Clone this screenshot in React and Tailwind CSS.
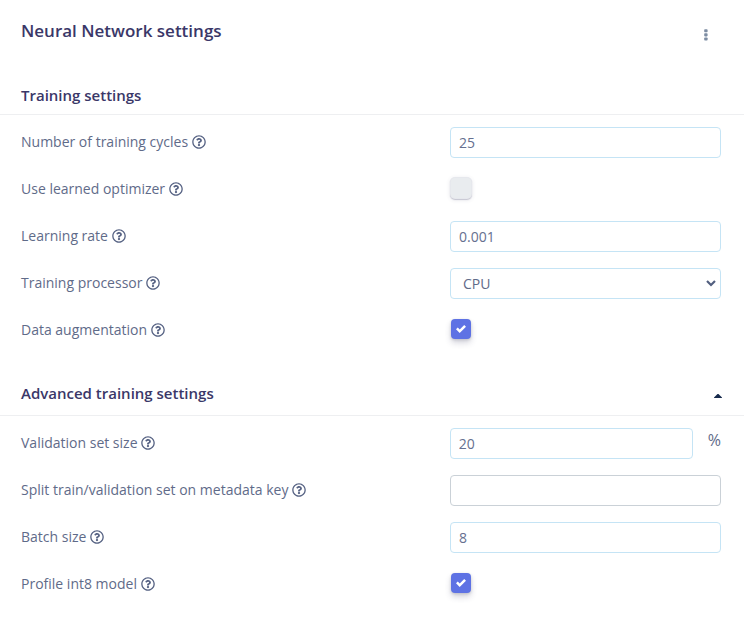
import { FaRegQuestionCircle } from "react-icons/fa";

function Row({ label, children }) {
  return (
    <div className="flex h-[47px] items-center pl-[21px] pr-[23px]">
      <div className="flex w-[429px] items-center pb-px text-sm">
        <span>{label}</span>
        <FaRegQuestionCircle className="ml-[3.8px] size-3.5 text-[#566283]" />
      </div>
      {children}
    </div>
  );
}

function Field({ value, className = "w-[271px] border-[#c5e4f5]" }) {
  return (
    <input
      type="text"
      defaultValue={value}
      className={`h-[31px] rounded border bg-white px-2 text-sm text-[#66708f] outline-none ${className}`}
    />
  );
}

function Checked() {
  return (
    <div className="mb-[3px] ml-px flex size-5 items-center justify-center rounded bg-[#5e72e4] shadow-[0_4px_6px_rgba(50,50,93,.2),0_1px_3px_rgba(0,0,0,.15)]">
      <svg viewBox="0 0 8 8" className="size-2.5" fill="#fff">
        <path d="M6.564.75l-3.59 3.612-1.538-1.55L0 4.26 2.974 7.25 8 2.193z" />
      </svg>
    </div>
  );
}

export default function App() {
  return (
    <div className="h-[632px] w-[744px] overflow-hidden bg-white font-['Open_Sans',sans-serif] text-[#5f6b89]">
      <header className="flex h-[76px] justify-between pl-[21px] pr-[36px] text-[#3a3768]">
        <h2 className="pt-[18px] text-[17px] leading-[26px] font-semibold">Neural Network settings</h2>
        <svg viewBox="0 0 4 12" className="mt-[28.5px] h-3 w-1" fill="#7d8da3">
          <rect x="0.2" y="0.2" width="3.4" height="3.1" rx="0.8" />
          <rect x="0.2" y="4.3" width="3.4" height="3.1" rx="0.8" />
          <rect x="0.2" y="8.4" width="3.4" height="3.1" rx="0.8" />
        </svg>
      </header>
      <div className="flex h-[39px] items-center border-b border-[#eeeff1] pl-[21px]">
        <h3 className="text-[15px] font-semibold text-[#3a3768]">Training settings</h3>
      </div>
      <section className="pt-1">
        <Row label="Number of training cycles"><Field value="25" /></Row>
        <Row label="Use learned optimizer">
          <div className="mb-[3px] ml-px size-5 rounded bg-[#e9ecef] shadow-[0_0_0_1px_#e6e8ed,0_1px_1px_1px_rgba(50,50,93,.22),0_1px_4px_1px_rgba(50,50,93,.12)]" />
        </Row>
        <Row label="Learning rate"><Field value="0.001" /></Row>
        <Row label="Training processor">
          <div className="flex h-[31px] w-[271px] items-center justify-between rounded border border-[#c5e4f5] pl-3 pr-1 pt-px text-sm">
            <span>CPU</span>
            <svg viewBox="0 0 10 8" className="mb-0.5 h-2 w-2.5" fill="none" stroke="#525f7f" strokeWidth="2.2">
              <path d="M1 2l4 4 4-4" />
            </svg>
          </div>
        </Row>
        <Row label="Data augmentation"><Checked /></Row>
      </section>
      <div className="mt-[23px] flex h-[39px] items-center justify-between border-b border-[#eeeff1] pl-[21px] pr-[22px]">
        <h3 className="pb-1.5 text-[15px] font-semibold text-[#3a3768]">Advanced training settings</h3>
        <svg viewBox="0 0 8 4" className="mb-px h-1 w-2" fill="#172b4d">
          <path d="M0 4V3.5L3.5 0h1L8 3.5V4z" />
        </svg>
      </div>
      <section className="pt-1">
        <Row label="Validation set size">
          <Field value="20" className="w-[243px] border-[#c5e4f5]" />
          <span className="mb-[7px] ml-[15px] text-base leading-6">%</span>
        </Row>
        <Row label="Split train/validation set on metadata key">
          <Field value="" className="w-[271px] border-[#cad1d7]" />
        </Row>
        <Row label="Batch size"><Field value="8" /></Row>
        <Row label="Profile int8 model"><Checked /></Row>
      </section>
    </div>
  );
}
